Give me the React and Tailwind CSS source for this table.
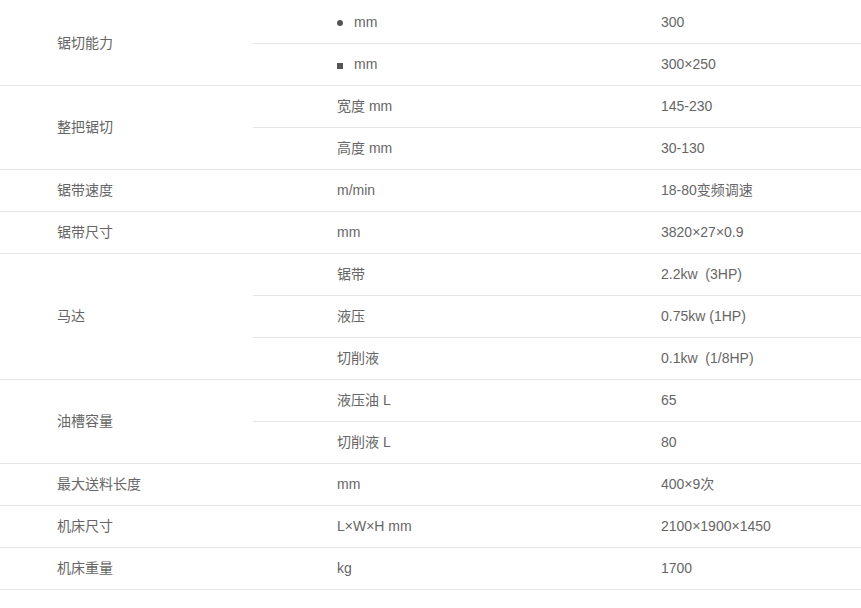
const groups = [
    { label: '锯切能力', rows: [['dot', '300'], ['square', '300×250']] },
    { label: '整把锯切', rows: [['宽度 mm', '145-230'], ['高度 mm', '30-130']] },
    { label: '锯带速度', rows: [['m/min', '18-80变频调速']] },
    { label: '锯带尺寸', rows: [['mm', '3820×27×0.9']] },
    { label: '马达', rows: [['锯带', '2.2kw  (3HP)'], ['液压', '0.75kw (1HP)'], ['切削液', '0.1kw  (1/8HP)']] },
    { label: '油槽容量', rows: [['液压油 L', '65'], ['切削液 L', '80']] },
    { label: '最大送料长度', rows: [['mm', '400×9次']] },
    { label: '机床尺寸', rows: [['L×W×H mm', '2100×1900×1450']] },
    { label: '机床重量', rows: [['kg', '1700']] },
];

function Unit({ value }) {
    if (value === 'dot') {
        return (
            <span className="flex items-center gap-[11px]">
                <span className="w-[6px] h-[6px] rounded-full bg-[#555]" />
                mm
            </span>
        );
    }
    if (value === 'square') {
        return (
            <span className="flex items-center gap-[11px]">
                <span className="w-[6px] h-[6px] bg-[#555] mt-[2px]" />
                mm
            </span>
        );
    }
    return <span>{value}</span>;
}

export default function App() {
    return (
        <div
            className="w-[861px] h-[608px] bg-white pt-[2px] text-[14px] text-[#666]"
            style={{ fontFamily: '"Liberation Sans", Arial, "Noto Sans CJK SC", sans-serif' }}
        >
            {groups.map((g) => (
                <div key={g.label} className="flex border-b border-[#e5e5e5]">
                    <div className="w-[253px] shrink-0 flex items-center pl-[57px]">
                        {g.label}
                    </div>
                    <div className="flex-1 flex flex-col">
                        {g.rows.map(([unit, val], i) => (
                            <div
                                key={i}
                                className={
                                    i < g.rows.length - 1
                                        ? 'flex items-center h-[42px] border-b border-[#e5e5e5]'
                                        : 'flex items-center h-[41px]'
                                }
                            >
                                <div className="w-[324px] shrink-0 pl-[84px]">
                                    <Unit value={unit} />
                                </div>
                                <div className="pl-[84px] whitespace-pre">{val}</div>
                            </div>
                        ))}
                    </div>
                </div>
            ))}
        </div>
    );
}
